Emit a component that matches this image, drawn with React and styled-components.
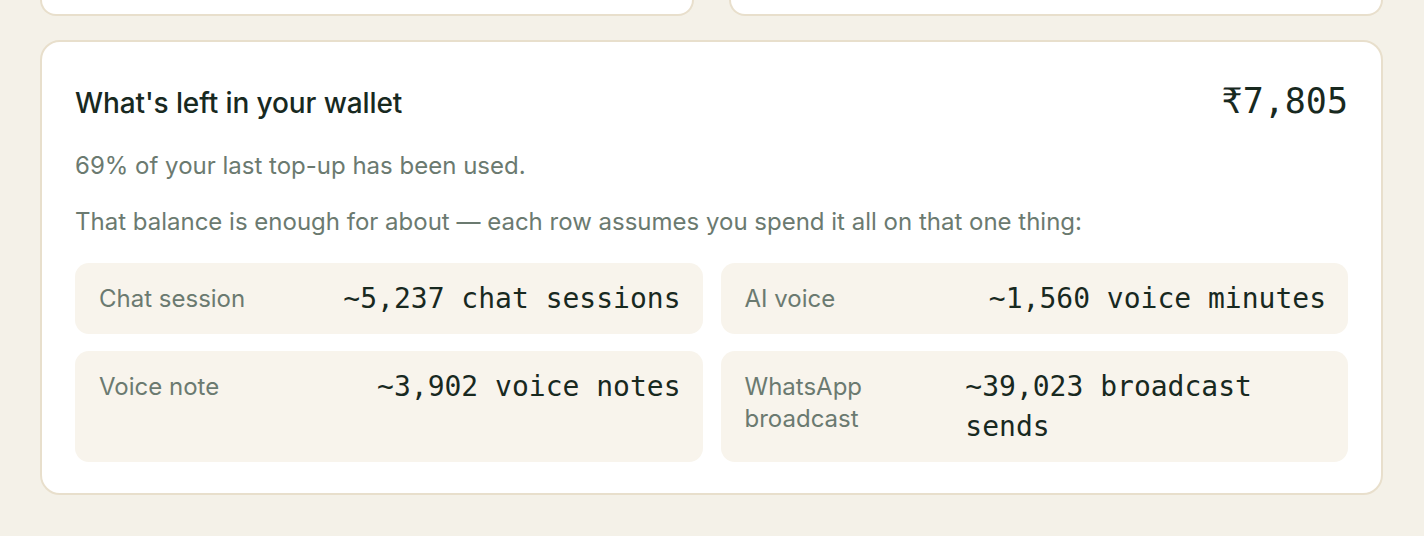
import React from "react";
import styled, { createGlobalStyle } from "styled-components";

const GlobalStyle = createGlobalStyle`
  html, body {
    margin: 0;
    padding: 0;
    background: #f4f1e8;
  }
  body {
    font-family: Inter, "Noto Sans", sans-serif;
    -webkit-font-smoothing: antialiased;
  }
`;

const Page = styled.div`
  padding: 0 41px 40px 40px;
  display: flex;
  flex-direction: column;
  gap: 24px;
`;

const TopRow = styled.div`
  display: grid;
  grid-template-columns: 1fr 1fr;
  gap: 35px;
`;

const TopCard = styled.div`
  height: 14px;
  background: #fff;
  border: 2px solid #e8dfcc;
  border-top: none;
  border-radius: 0 0 18px 18px;
`;

const Card = styled.section`
  background: #fff;
  border: 2px solid #e8dfcc;
  border-radius: 20px;
  padding: 39px 33px 31px;
`;

const Header = styled.div`
  display: flex;
  justify-content: space-between;
  align-items: baseline;
  margin-bottom: 28px;
`;

const Title = styled.h2`
  margin: 0;
  font-size: 28px;
  font-weight: 500;
  color: #18291f;
  letter-spacing: -0.1px;
`;

const Amount = styled.div`
  font-family: "DejaVu Sans Mono", "Liberation Mono", monospace;
  font-size: 35px;
  color: #18291f;
  line-height: 41px;
`;

const Note = styled.p`
  margin: 0 0 ${(p) => p.$gap || 0}px;
  font-size: 24px;
  line-height: 32px;
  color: #6b7a70;
`;

const Grid = styled.div`
  display: grid;
  grid-template-columns: 1fr 1fr;
  gap: 17px 18px;
`;

const Row = styled.div`
  background: #f8f4ec;
  border-radius: 14px;
  padding: 16px 22px 15px 24px;
  display: flex;
  justify-content: space-between;
  align-items: flex-start;
  gap: 24px;
`;

const Label = styled.span`
  font-size: 24px;
  line-height: 32px;
  color: #6b7a70;
  padding-top: 4px;
`;

const Value = styled.span`
  flex-shrink: 0.4;
  font-family: "DejaVu Sans Mono", "Liberation Mono", monospace;
  font-size: 28px;
  line-height: 40px;
  color: #18291f;
`;

const rows = [
  { label: "Chat session", value: "~5,237 chat sessions" },
  { label: "AI voice", value: "~1,560 voice minutes" },
  { label: "Voice note", value: "~3,902 voice notes" },
  { label: "WhatsApp broadcast", value: "~39,023 broadcast sends" },
];

export default function App() {
  return (
    <>
      <GlobalStyle />
      <Page>
        <TopRow>
          <TopCard />
          <TopCard />
        </TopRow>
        <Card>
          <Header>
            <Title>What's left in your wallet</Title>
            <Amount>₹7,805</Amount>
          </Header>
          <Note $gap={24}>69% of your last top-up has been used.</Note>
          <Note $gap={25}>
            That balance is enough for about — each row assumes you spend it all on that one thing:
          </Note>
          <Grid>
            {rows.map((r) => (
              <Row key={r.label}>
                <Label>{r.label}</Label>
                <Value>{r.value}</Value>
              </Row>
            ))}
          </Grid>
        </Card>
      </Page>
    </>
  );
}
